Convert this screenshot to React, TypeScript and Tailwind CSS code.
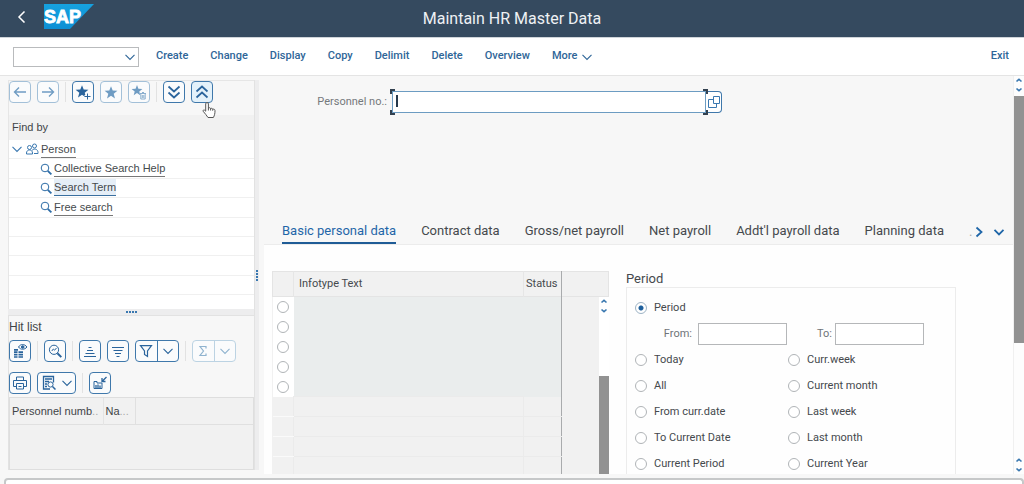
import { useState } from "react"
import type { ReactNode } from "react"
import clsx from "clsx"

const MENU = ["Create", "Change", "Display", "Copy", "Delimit", "Delete", "Overview"]

const TABS = [
  "Basic personal data",
  "Contract data",
  "Gross/net payroll",
  "Net payroll",
  "Addt'l payroll data",
  "Planning data",
]

const SEARCH_NODES = ["Collective Search Help", "Search Term", "Free search"]

const PERIODS: [string, string][] = [
  ["Today", "Curr.week"],
  ["All", "Current month"],
  ["From curr.date", "Last week"],
  ["To Current Date", "Last month"],
  ["Current Period", "Current Year"],
]

const ARIAL = "font-['Liberation_Sans',Arial,sans-serif]"

function Svg({
  size = 16,
  width = 1,
  className,
  children,
}: {
  size?: number
  width?: number
  className?: string
  children: ReactNode
}) {
  return (
    <svg
      viewBox={`0 0 ${size} ${size}`}
      width={size}
      height={size}
      fill="none"
      stroke="currentColor"
      strokeWidth={width}
      className={clsx("flex-none", className)}
      aria-hidden="true"
    >
      {children}
    </svg>
  )
}

function ChevronDown({ width = 1.1, className }: { width?: number; className?: string }) {
  return (
    <Svg size={12} width={width} className={className}>
      <path d="M1.5 3.8 6 8.4l4.5-4.6" />
    </Svg>
  )
}

const STAR = "M7 1.2 8.7 5.6l4.7.2-3.7 3 1.3 4.6L7 10.8 3 13.4l1.3-4.6-3.7-3 4.7-.2Z"

/** Square toolbar button with the rounded outline. */
function ToolButton({
  label,
  dim,
  hot,
  className,
  children,
}: {
  label: string
  dim?: boolean
  hot?: boolean
  className?: string
  children: ReactNode
}) {
  return (
    <button
      type="button"
      aria-label={label}
      className={clsx(
        "flex h-[22px] min-w-[22px] flex-none items-center justify-center rounded border",
        dim ? "border-[#a3c0d8] text-[#6f9cc3]" : "border-[#3f78ab] text-[#2a649c]",
        hot ? "bg-[#e3f1fa]" : "bg-[#fafbfc]",
        className
      )}
    >
      {children}
    </button>
  )
}

/** Two buttons sharing one outline: the action and its menu. */
function SplitButton({ label, dim, children }: { label: string; dim?: boolean; children: ReactNode }) {
  return (
    <div
      className={clsx(
        "flex h-[22px] w-[44px] flex-none rounded border bg-[#fafbfc]",
        dim ? "border-[#bcd3e3] text-[#8fb3cf]" : "border-[#3f78ab] text-[#2a649c]"
      )}
    >
      <button type="button" aria-label={label} className="flex flex-1 items-center justify-center">
        {children}
      </button>
      <button
        type="button"
        aria-label={`${label} menu`}
        className="flex flex-1 items-center justify-center border-l border-inherit"
      >
        <ChevronDown />
      </button>
    </div>
  )
}

function Separator() {
  return <span className="h-5 w-px flex-none bg-[#e2e2e2]" />
}

/** The pair of small step arrows at the end of a scrollbar. */
function ScrollArrows() {
  return (
    <svg viewBox="0 0 10 18" width={10} height={18} fill="none" stroke="#3a78b0" strokeWidth={1.6} aria-hidden="true">
      <path d="M2.5 5.5 5 3.3l2.5 2.2M2.5 12.5 5 14.7l2.5-2.2" />
    </svg>
  )
}

function Radio(props: { name: string; checked?: boolean; label?: string; onChange?: () => void }) {
  return (
    <input
      type="radio"
      name={props.name}
      aria-label={props.label}
      checked={props.checked ?? false}
      onChange={props.onChange ?? (() => {})}
      className="size-3 flex-none appearance-none rounded-full border border-[#b0b4b7] bg-white checked:border-[#9db3c5] checked:bg-[radial-gradient(circle,#1d5f9c_2px,white_3px)]"
    />
  )
}

function SapLogo() {
  return (
    <svg viewBox="0 0 50 25" width={50} height={25} role="img" aria-label="SAP">
      <defs>
        <linearGradient id="sap" x1="0" y1="0" x2="0" y2="1">
          <stop offset="0" stopColor="#16a2e0" />
          <stop offset="1" stopColor="#0d8fd4" />
        </linearGradient>
      </defs>
      <path d="M0 0h50L26 25H0Z" fill="url(#sap)" />
      <text
        x="0"
        y="19"
        fill="white"
        stroke="white"
        strokeWidth="0.8"
        fontSize="18"
        fontWeight="700"
        fontFamily="Liberation Sans, Arial, sans-serif"
      >
        SAP
      </text>
    </svg>
  )
}

function HandCursor() {
  return (
    <svg
      viewBox="0 0 15 18"
      width={15}
      height={18}
      className="pointer-events-none absolute top-5 left-[193px]"
      fill="white"
      stroke="#555"
      strokeWidth={1}
      aria-hidden="true"
    >
      <path d="M5 1.5c.9 0 1.4.6 1.4 1.4V7c.6-.5 2-.3 2.2.5.6-.4 1.9-.2 2.1.7.9-.3 2.3 0 2.3 1.4 0 3-.4 4.6-1.6 6.9H6C4.700 14.500 3 12.500 1.200 10.300c-.6-.8.5-1.800 1.400-1.100l1.100 1V2.900c0-.8.5-1.400 1.300-1.400Z" />
      <path d="M6.400 7v2.500M8.600 7.500v2M10.700 8.200v1.500" />
    </svg>
  )
}

function FindPanel() {
  return (
    <section className="border-t border-l border-[#e6e6e6]">
      <div className="relative flex h-[34px] items-start">
        <div className="flex items-center gap-1.5">
          <ToolButton label="Back" dim>
            <Svg width={1.4}>
              <path d="M14 8H2.500M7 3.500 2.500 8 7 12.500" />
            </Svg>
          </ToolButton>
          <ToolButton label="Forward" dim>
            <Svg width={1.4}>
              <path d="M2 8h11.500M9 3.500 13.500 8 9 12.500" />
            </Svg>
          </ToolButton>
          <Separator />
          <ToolButton label="Add favorite">
            <Svg>
              <path d={STAR} fill="currentColor" stroke="none" />
              <path d="M12.500 9.500v6M9.500 12.500h6" stroke="#fafbfc" strokeWidth={3} />
              <path d="M12.500 9.500v6M9.500 12.500h6" />
            </Svg>
          </ToolButton>
          <ToolButton label="Favorites" dim>
            <Svg>
              <path d={STAR} fill="currentColor" stroke="none" transform="translate(1 1)" />
            </Svg>
          </ToolButton>
          <ToolButton label="Delete favorite" dim>
            <Svg>
              <path d="M6 1l1.400 3.700 4 .2-3.100 2.500.9 3.900L6 9l-3.300 2.200 1-3.800L.6 4.900l4-.2Z" fill="currentColor" stroke="none" />
              <path d="M9 9.500h6M11 8.500h2M9.800 10v5h4.400v-5M11.300 11v3M12.800 11v3" strokeWidth={0.8} />
            </Svg>
          </ToolButton>
          <Separator />
          <ToolButton label="Expand all">
            <Svg width={1.7}>
              <path d="m2.500 2.500 5.500 5 5.500-5M2.500 8.500l5.500 5 5.500-5" />
            </Svg>
          </ToolButton>
          <ToolButton label="Collapse all" hot>
            <Svg width={1.7}>
              <path d="m2.500 7.500 5.500-5 5.500 5M2.500 13.500l5.500-5 5.500 5" />
            </Svg>
          </ToolButton>
        </div>
        <HandCursor />
      </div>

      <h2 className={clsx("flex h-[25px] items-center bg-[#f1f1f1] px-[3px] text-[11px] text-[#3f4447]", ARIAL)}>
        Find by
      </h2>

      <div className={clsx("bg-white text-[11px] text-[#454a4d]", ARIAL)}>
        <ul className="flex h-[155px] flex-col">
          <li className="flex flex-1 items-center border-b border-[#f0f0f0] pl-0.5">
            <ChevronDown className="text-[#3a78b0]" />
            <Svg size={14} className="ml-0.5 text-[#3a78b0]">
              <circle cx="9.500" cy="4" r="2" />
              <circle cx="4.500" cy="5.500" r="2" />
              <path d="M1.500 12V11c0-4 6-4 6 0v1ZM7 8.500c2-2.600 6-1.500 6 2v1H9" />
            </Svg>
            <a href="#person" className="ml-0.5 border-b border-[#777] leading-4">
              Person
            </a>
          </li>
          {SEARCH_NODES.map((node) => (
            <li key={node} className="flex flex-1 items-center border-b border-[#f0f0f0] pl-[31px]">
              <Svg size={12} className="mr-0.5 text-[#2d6ca6]">
                <circle cx="5" cy="5" r="3.800" />
                <path d="m7.800 7.800 3.600 3.600" strokeWidth={1.800} />
              </Svg>
              <a
                href="#search"
                className={clsx(
                  "border-b leading-4",
                  node === "Search Term" ? "border-[#3a6f9f] bg-[#e5eef7]" : "border-[#777]"
                )}
              >
                {node}
              </a>
            </li>
          ))}
          {[0, 1, 2, 3].map((i) => (
            <li key={i} className="flex-1 border-b border-[#f0f0f0]" />
          ))}
        </ul>
        <div className="h-[14px]" />
      </div>
    </section>
  )
}

function HitList() {
  return (
    <section
      className={clsx(
        "flex min-h-0 flex-1 flex-col border-t border-l border-[#e2e2e2] text-[11px] text-[#3f4447]",
        ARIAL
      )}
    >
      <h2 className="mb-0.5 flex h-[22px] items-center text-[12px]">Hit list</h2>
      <div className="flex h-[22px] items-center gap-1.5">
        <ToolButton label="Details">
          <Svg>
            <path d="M6.500 4c2-3.300 6-3.300 8.500 0-2.500 3-6.500 3-8.500 0Z" />
            <circle cx="10.700" cy="4" r="1.300" fill="currentColor" />
            <path d="M2 6.800h4M2 9.200h3.500M6.500 9.200H11M2 11.600h3.500M6.500 11.600H11M2 14h3.500M6.500 14H11" strokeWidth={1.700} />
          </Svg>
        </ToolButton>
        <Separator />
        <ToolButton label="Find">
          <Svg>
            <circle cx="7" cy="6.800" r="4.600" />
            <path d="m10.400 10.200 3.900 3.900" strokeWidth={2} />
            <path d="m4.800 8 1.500-2 1.300 1.200 1.900-2.200" />
          </Svg>
        </ToolButton>
        <Separator />
        <ToolButton label="Sort ascending">
          <Svg>
            <path d="M6.500 4.500h3M5 7.500h6M3.500 10.500h9M2 13.500h12" />
          </Svg>
        </ToolButton>
        <ToolButton label="Sort descending">
          <Svg>
            <path d="M2 4.500h12M3.500 7.500h9M5 10.500h6M6.500 13.500h3" />
          </Svg>
        </ToolButton>
        <SplitButton label="Filter">
          <Svg size={14} width={1.200}>
            <path d="M1.500 1.700h11L8.500 7v5.500l-3-2V7Z" />
          </Svg>
        </SplitButton>
        <Separator />
        <SplitButton label="Total" dim>
          <Svg size={12} width={1.200}>
            <path d="M9 3.500v-2H3l3.500 4.500L3 10.500h6v-2" />
          </Svg>
        </SplitButton>
      </div>
      <div className="mt-2.5 flex h-[22px] items-center gap-1.5">
        <ToolButton label="Print">
          <Svg>
            <path d="M4.500 5V2h7v3M4 11.500H1.500v-6h13v6H12M4.500 8.500h7v5.500h-7ZM6.500 11.500h3" />
          </Svg>
        </ToolButton>
        <ToolButton label="Views" className="w-[39px] gap-1">
          <Svg>
            <path d="M9 14H2.500V1.500h10v6M4 4h7M4 6.500h4M4 9h2M4 11.500h2" strokeWidth={1.300} />
            <circle cx="9.500" cy="9.500" r="2.600" />
            <path d="m11.500 11.500 3 3" strokeWidth={1.500} />
          </Svg>
          <ChevronDown />
        </ToolButton>
        <Separator />
        <ToolButton label="Export">
          <Svg>
            <path d="M2 13.500V6.500h3V8h5v5.500Z" />
            <path d="M4 10v3M6 9.500V13M8 10.500V13" strokeWidth={1.300} />
            <path d="m14.500 2-4 4M10 3v3.500h3.500" strokeWidth={1.300} />
          </Svg>
        </ToolButton>
      </div>
      <div className="mt-[3px] flex-1 border border-[#dedede] bg-[#f1f1f1]">
        <table className="w-full table-fixed border-collapse">
          <thead>
            <tr className="h-[26px] border-b border-[#e0e0e0] text-left whitespace-nowrap">
              <th className="w-[93px] border-r border-[#e4e4e4] pl-0.5 font-normal">
                Personnel numb<span className="text-[#aaa]">..</span>
              </th>
              <th className="w-[32px] border-r border-[#e0e0e0] pl-0.5 font-normal">
                Na<span className="text-[#aaa]">...</span>
              </th>
              <th aria-label="Empty" />
            </tr>
          </thead>
        </table>
      </div>
    </section>
  )
}

function InfotypeTable() {
  return (
    <table className="w-[337px] flex-none table-fixed border-collapse self-start bg-[#f1f1f1] text-[11px] text-[#45494d]">
      <colgroup>
        <col className="w-[21px]" />
        <col className="w-[230px]" />
        <col className="w-[38px]" />
        <col />
        <col className="w-2.5" />
      </colgroup>
      <thead>
        <tr className="h-[25px] border border-[#e4e4e4] text-left">
          <th aria-label="Select" className="border-r border-[#e6e6e6]" />
          <th className="pl-[5px] font-normal">Infotype Text</th>
          <th className="border-r border-l border-l-[#e6e6e6] border-r-[#a9abad] pl-0.5 font-normal">Status</th>
          <th colSpan={2} aria-label="Empty" />
        </tr>
      </thead>
      <tbody>
        {Array.from({ length: 9 }, (_, i) => (
          <tr key={i} className="h-5">
            {i < 5 ? (
              <>
                <td className="bg-white">
                  <div className="flex justify-center">
                    <Radio name="infotype" label={`Row ${i + 1}`} />
                  </div>
                </td>
                <td colSpan={2} className="border-r border-[#a9abad] bg-[#eaeded]" />
              </>
            ) : (
              <>
                <td className="border-b border-[#fafafa]" />
                <td className="border border-[#ebebeb]" />
                <td className="border-r border-b border-r-[#a9abad] border-b-[#ebebeb]" />
              </>
            )}
            {i === 0 && (
              <>
                <td rowSpan={9} />
                <td rowSpan={9} className="bg-white align-top">
                  <ScrollArrows />
                  <div className="mt-[61px] h-[100px] bg-[#929292]" />
                </td>
              </>
            )}
          </tr>
        ))}
      </tbody>
    </table>
  )
}

function PeriodGroup() {
  const [period, setPeriod] = useState("Period")

  const option = (name: string) => (
    <label key={name} className="flex h-[26px] items-center gap-[7px]">
      <Radio name="period" checked={period === name} onChange={() => setPeriod(name)} />
      {name}
    </label>
  )

  return (
    <section className="w-[330px] flex-none">
      <h2 className="flex h-4 items-center text-[13px] text-[#45494d]">Period</h2>
      <div className="h-[220px] border border-[#ececec] px-2 pt-[7px] text-[11px] text-[#45494d]">
        {option("Period")}
        <div className="flex h-[26px] items-center text-[#6f7478]">
          <label htmlFor="from" className="w-[63px] pr-1.5 text-right">
            From:
          </label>
          <input id="from" className="h-[22px] w-[89px] border border-[#b5b7b9] bg-white px-1" />
          <label htmlFor="to" className="w-12 pr-[3px] text-right">
            To:
          </label>
          <input id="to" className="h-[22px] w-[89px] border border-[#b5b7b9] bg-white px-1" />
        </div>
        <div className="grid grid-cols-[153px_1fr]">{PERIODS.flat().map(option)}</div>
      </div>
    </section>
  )
}

function Workspace() {
  const [tab, setTab] = useState(TABS[0])

  return (
    <main className="flex min-w-0 flex-1 flex-col pl-[5px]">
      <div className="flex items-center pt-[13px] pl-[50px] text-[11px] text-[#75797c]">
        <label htmlFor="pernr" className="w-[73px] flex-none text-right">
          Personnel no.:
        </label>
        <div className="relative ml-[3px] flex">
          <input
            id="pernr"
            defaultValue=""
            className="m-0.5 mr-0 h-[22px] w-[314px] border border-[#6c9cc2] bg-white px-1 text-[#333]"
          />
          <button
            type="button"
            aria-label="Value help"
            className="my-0.5 flex h-[22px] w-4 items-center justify-center rounded-r border border-l-0 border-[#3f78ab] bg-white text-[#3a78b0]"
          >
            <Svg size={14}>
              <path d="M6.500 1.500h6v7h-6ZM6.500 4.500h-5v8h8v-4" />
            </Svg>
          </button>
          <span className="absolute top-1.5 left-1.5 h-3 w-0.5 bg-[#25384b]" />
          <span className="absolute top-0 left-0 size-[5px] border-t-2 border-l-2 border-[#33414f]" />
          <span className="absolute bottom-0 left-0 size-[5px] border-b-2 border-l-2 border-[#33414f]" />
          <span className="absolute top-0 right-[14px] size-[5px] border-t-2 border-r-2 border-[#33414f]" />
          <span className="absolute right-[14px] bottom-0 size-[5px] border-r-2 border-b-2 border-[#33414f]" />
        </div>
      </div>

      <div className="mt-[104px] flex h-[26px] items-stretch justify-between border-b border-[#ececec] pl-[18px] text-[13px] text-[#45494d]">
        <div role="tablist" className="flex gap-[25px]">
          {TABS.map((name) => (
            <button
              key={name}
              type="button"
              role="tab"
              aria-selected={tab === name}
              onClick={() => setTab(name)}
              className={clsx(
                "border-b-2 whitespace-nowrap",
                tab === name ? "border-[#1f5c96] text-[#1f66a8]" : "border-transparent"
              )}
            >
              {name}
            </button>
          ))}
          <span className="flex items-center text-[#aaa]">.</span>
        </div>
        <div className="flex items-center gap-2 pr-2 text-[#1f66a8]">
          <button type="button" aria-label="Scroll tabs">
            <Svg size={12} width={1.800}>
              <path d="M3.500 1.500 8.500 6l-5 4.500" />
            </Svg>
          </button>
          <button type="button" aria-label="All tabs">
            <ChevronDown width={1.800} />
          </button>
        </div>
      </div>

      <div className="flex min-h-0 flex-1 gap-[17px] overflow-hidden bg-[#fefefe] pt-[26px] pl-2">
        <InfotypeTable />
        <PeriodGroup />
      </div>
    </main>
  )
}

export default function App() {
  return (
    <div className="flex h-screen flex-col overflow-hidden bg-[#f7f7f7] font-[Roboto,'Liberation_Sans',sans-serif]">
      <header className="grid h-[37px] flex-none grid-cols-[1fr_auto_1fr] items-center bg-[#354a5f] text-white">
        <div className="flex items-center gap-4 pb-1 pl-4">
          <button type="button" aria-label="Back">
            <Svg size={12} width={1.500}>
              <path d="M8.500.500 3 6l5.500 5.500" />
            </Svg>
          </button>
          <SapLogo />
        </div>
        <h1 className="text-[16px] text-[#eef1f4]">Maintain HR Master Data</h1>
      </header>

      <nav className="flex h-[39px] flex-none items-center border-t border-b border-t-[#cfd4d9] border-b-[#e4e4e4] bg-white pr-[15px] pl-[13px] text-[11px] font-medium text-[#2f6698]">
        <div className="relative">
          <select
            aria-label="Command"
            className="block h-5 w-[126px] appearance-none border border-[#b9bbbd] bg-white px-1"
          />
          <ChevronDown className="pointer-events-none absolute top-1 right-[3px]" />
        </div>
        <div className="ml-[17px] flex flex-1 gap-[22px]">
          {MENU.map((item) => (
            <button key={item} type="button">
              {item}
            </button>
          ))}
          <button type="button" className="flex items-center gap-1">
            More
            <ChevronDown />
          </button>
        </div>
        <button type="button">Exit</button>
      </nav>

      <div className="flex min-h-0 flex-1">
        <aside className="mt-1 mb-1 ml-2 flex w-[247px] flex-none flex-col border-r border-[#e2e2e2]">
          <FindPanel />
          <div className="flex h-1.5 flex-none items-center justify-center gap-px bg-[#ededee]">
            {[0, 1, 2, 3].map((i) => (
              <span key={i} className="size-0.5 bg-[#3a78b0]" />
            ))}
          </div>
          <HitList />
        </aside>
        <div className="mt-1 mb-1 flex w-1 flex-none flex-col items-center justify-center gap-px bg-[#ededee]">
          {[0, 1, 2, 3].map((i) => (
            <span key={i} className="size-0.5 bg-[#3a78b0]" />
          ))}
        </div>

        <Workspace />

        <div className="flex w-[11px] flex-none flex-col items-center border-l border-[#f0f0f0] bg-[#fdfdfd]">
          <ScrollArrows />
          <div className="mt-0.5 h-[247px] w-full bg-[#929292]" />
          <div className="flex-1" />
          <ScrollArrows />
        </div>
      </div>

      <footer className="mt-1 ml-1 h-1.5 flex-none rounded-t border-2 border-b-0 border-[#c6c8c9] bg-white" />
    </div>
  )
}
